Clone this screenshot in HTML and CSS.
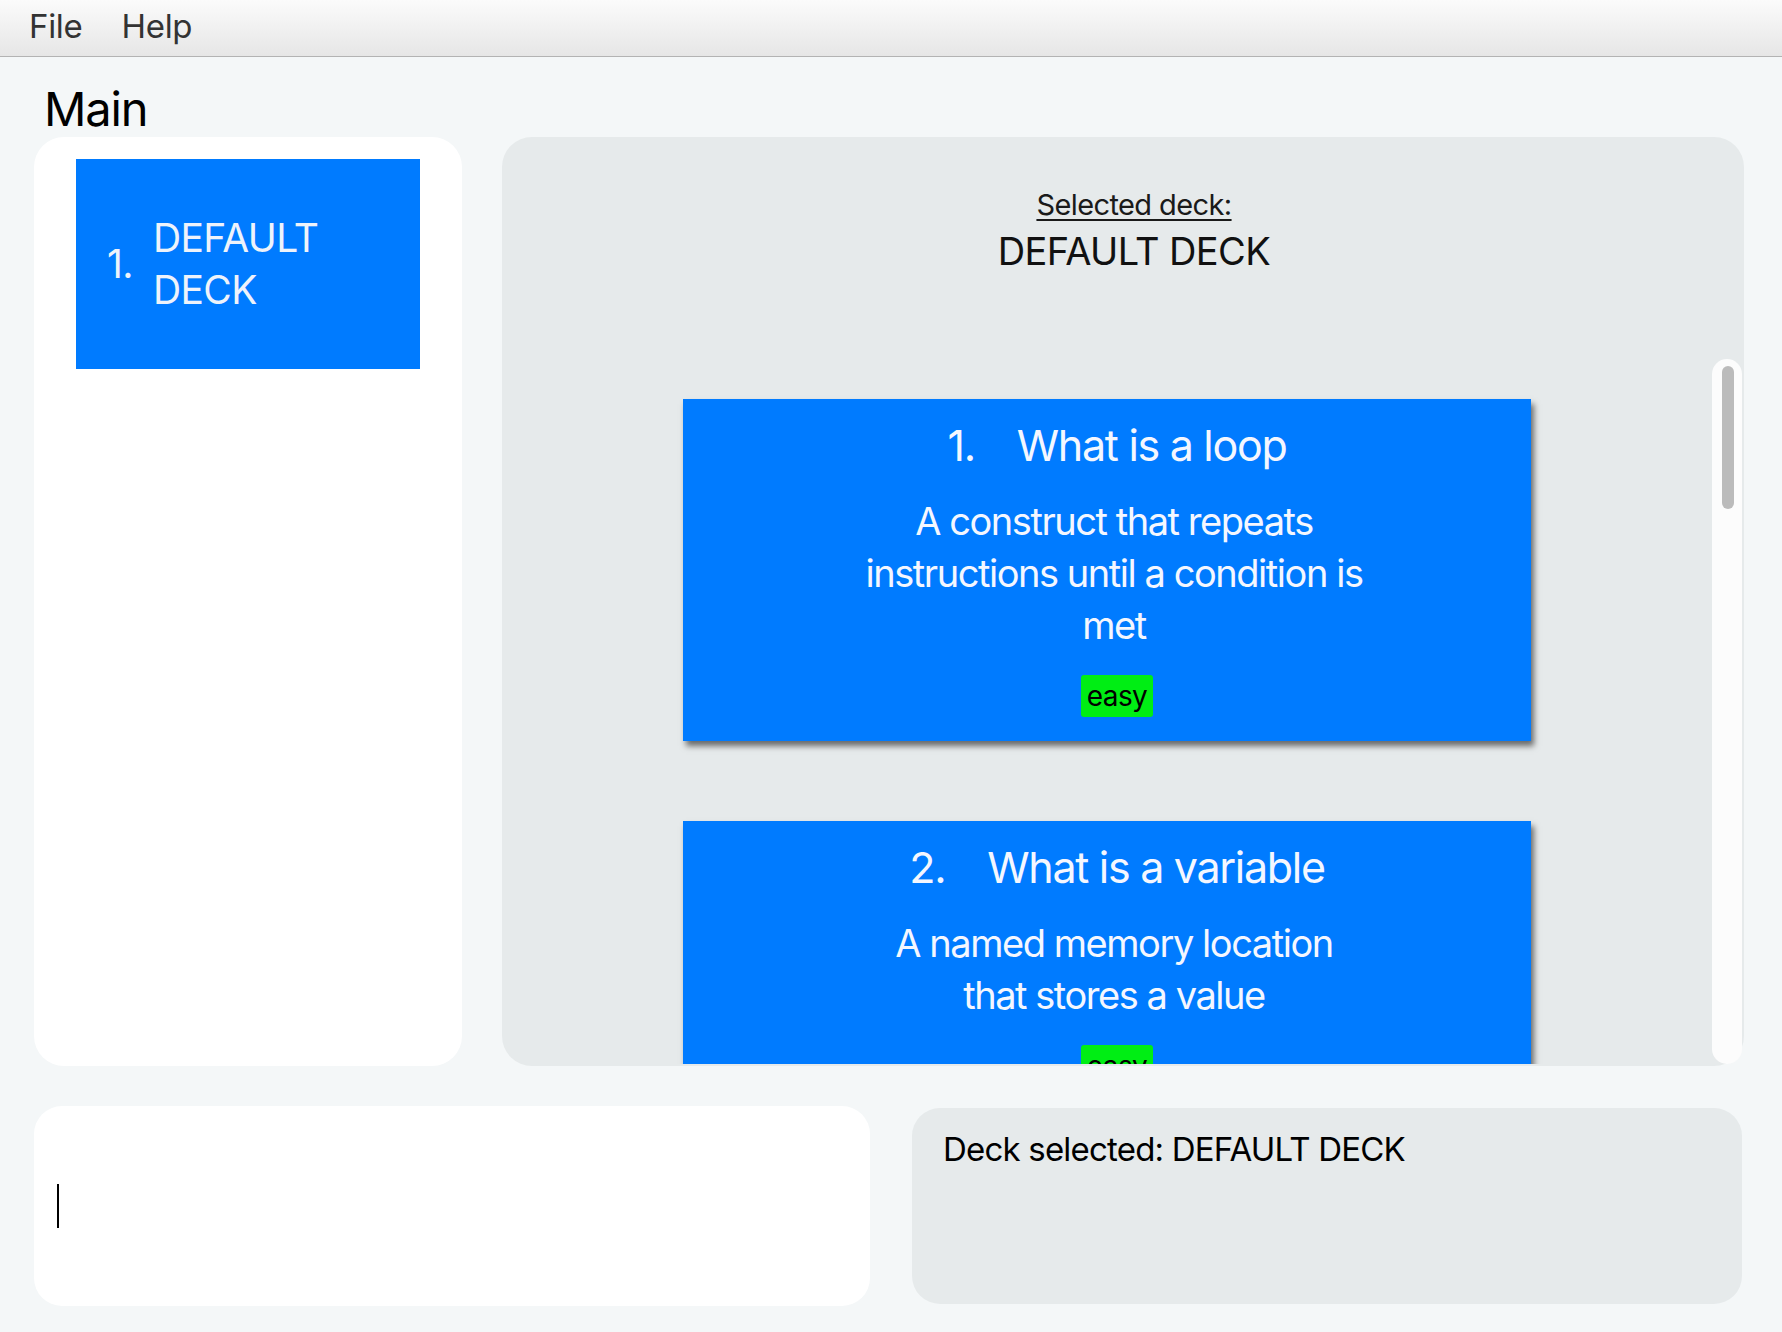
FILE: index.html
```html
<!DOCTYPE html>
<html lang="en">
<head>
<meta charset="utf-8">
<title>Main</title>
<link rel="stylesheet" href="styles.css">
</head>
<body>
<div class="menubar">
  <span class="menu-item">File</span>
  <span class="menu-item">Help</span>
</div>
<div class="main-title">Main</div>
<div class="upper-row">
  <div class="deck-panel">
    <div class="deck-card">
      <span class="deck-index">1.</span>
      <span class="deck-name">DEFAULT DECK</span>
    </div>
  </div>
  <div class="cards-panel">
    <div class="cards-header">
      <div class="selected-label">Selected deck:</div>
      <div class="selected-name">DEFAULT DECK</div>
    </div>
    <div class="scroll-area">
      <div class="scroll-content">
        <div class="flashcard">
          <div class="fc-title"><span class="fc-num">1.</span><span class="fc-q">What is a loop</span></div>
          <div class="fc-answer">A construct that repeats<br>instructions until a condition is<br>met</div>
          <div class="fc-tag">easy</div>
        </div>
        <div class="flashcard">
          <div class="fc-title"><span class="fc-num">2.</span><span class="fc-q">What is a variable</span></div>
          <div class="fc-answer">A named memory location<br>that stores a value</div>
          <div class="fc-tag">easy</div>
        </div>
      </div>
      <div class="scroll-track"><div class="scroll-thumb"></div></div>
    </div>
  </div>
</div>
<div class="lower-row">
  <div class="command-box"><span class="caret"></span></div>
  <div class="result-box">Deck selected: DEFAULT DECK</div>
</div>
</body>
</html>
```

FILE: styles.css
```css
* { box-sizing: border-box; }
html, body {
  margin: 0;
  padding: 0;
}
body {
  width: 1782px;
  height: 1332px;
  overflow: hidden;
  background: #f4f7f8;
  font-family: Inter, "Noto Sans", sans-serif;
  color: #111;
}
.menubar {
  height: 57px;
  border-bottom: 1px solid #b3b3b3;
  background: linear-gradient(#fbfbfb, #e6e6e6);
  display: flex;
  align-items: center;
  padding: 0 0 4px 9px;
}
.menu-item {
  font-size: 33px;
  color: #333;
  padding: 0 19px 0 20px;
  letter-spacing: -0.3px;
}
.main-title {
  margin: 23px 0 0 44px;
  font-size: 47px;
  line-height: 57px;
  color: #000;
  letter-spacing: -1.2px;
}
.upper-row {
  display: flex;
  gap: 40px;
  margin-left: 34px;
  height: 929px;
}
.deck-panel {
  width: 428px;
  background: #fff;
  border-radius: 30px;
  padding: 22px 42px;
}
.deck-card {
  height: 210px;
  background: #007bff;
  color: #eef3fb;
  display: flex;
  align-items: center;
  padding-left: 31px;
  gap: 20px;
  font-size: 39px;
  line-height: 52px;
  letter-spacing: -0.6px;
}
.deck-name {
  width: 200px;
}
.cards-panel {
  width: 1242px;
  background: #e6eaeb;
  border-radius: 30px;
  display: flex;
  flex-direction: column;
  padding-bottom: 2px;
}
.cards-header {
  padding: 50px 0 0 22px;
  text-align: center;
  height: 222px;
}
.selected-label {
  font-size: 29px;
  line-height: 36px;
  text-decoration: underline;
  text-underline-offset: 4px;
  letter-spacing: -0.6px;
  color: #1a1a1a;
}
.selected-name {
  margin-top: 5px;
  font-size: 38px;
  line-height: 46px;
  letter-spacing: -0.6px;
  color: #111;
}
.scroll-area {
  flex: 1;
  display: flex;
  min-height: 0;
}
.scroll-content {
  flex: 1;
  overflow: hidden;
  padding-top: 40px;
  display: flex;
  flex-direction: column;
  align-items: center;
  gap: 80px;
}
.flashcard {
  width: 848px;
  flex-shrink: 0;
  background: #007bff;
  color: #f4f7ff;
  box-shadow: 3px 5px 6px rgba(0, 0, 0, 0.55);
  padding: 20px 0 24px 20px;
  display: flex;
  flex-direction: column;
  align-items: center;
  text-align: center;
}
.fc-title {
  font-size: 43px;
  line-height: 53px;
  letter-spacing: -1.3px;
  display: flex;
  gap: 42px;
}
.fc-answer {
  margin-top: 23px;
  margin-right: 6px;
  font-size: 38px;
  line-height: 52px;
  letter-spacing: -1.45px;
}
.fc-tag {
  margin-top: 24px;
  height: 42px;
  line-height: 42px;
  padding: 0 6px;
  font-size: 28px;
  letter-spacing: -0.6px;
  background: #00ee14;
  color: #000;
  border-radius: 3px;
}
.scroll-track {
  width: 30px;
  margin-right: 2px;
  background: #fcfcfc;
  border-radius: 15px;
  padding: 7px 0 0 10px;
}
.scroll-thumb {
  width: 12px;
  height: 143px;
  background: #bbbbbb;
  border-radius: 6px;
}
.lower-row {
  display: flex;
  margin: 40px 0 0 34px;
  gap: 42px;
  height: 200px;
}
.command-box {
  width: 836px;
  background: #fff;
  border-radius: 28px;
  display: flex;
  align-items: center;
  padding-left: 23px;
}
.caret {
  width: 2px;
  height: 44px;
  background: #000;
}
.result-box {
  width: 830px;
  margin: 2px 0;
  background: #e6eaeb;
  border-radius: 28px;
  padding: 21px 0 0 31px;
  font-size: 33px;
  line-height: 40px;
  letter-spacing: -0.8px;
  color: #000;
}
```
